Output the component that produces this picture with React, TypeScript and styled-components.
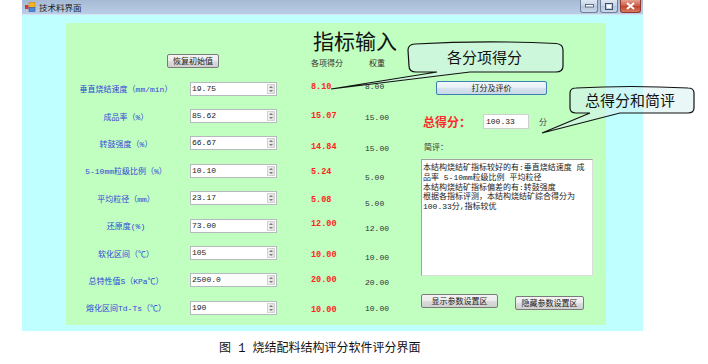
import React from 'react'
import styled, { createGlobalStyle } from 'styled-components'

const GlobalStyle = createGlobalStyle`
  html, body {
    margin: 0;
    padding: 0;
    background: #fff;
  }
  body {
    font-family: "Liberation Mono", "Noto Sans CJK SC", monospace;
  }
`

const CJK = `"Noto Sans CJK SC", sans-serif`
const MONO = `"Liberation Mono", "Noto Sans CJK SC", monospace`
const COLUMNS = '120px 91px 34px 54px 51px'

const params = [
  { label: '垂直烧结速度（mm/min）', value: '19.75', score: '8.10', weight: '8.00', sdy: -2, wdy: -2 },
  { label: '成品率（%）', value: '85.62', score: '15.07', weight: '15.00', sdy: 0, wdy: 1 },
  { label: '转鼓强度（%）', value: '66.67', score: '14.84', weight: '15.00', sdy: 4, wdy: 5 },
  { label: '5-10mm粒级比例（%）', value: '10.10', score: '5.24', weight: '5.00', sdy: 1, wdy: 7 },
  { label: '平均粒径（mm）', value: '23.17', score: '5.08', weight: '5.00', sdy: 2, wdy: 5 },
  { label: '还原度(%)', value: '73.00', score: '12.00', weight: '12.00', sdy: -2, wdy: 3 },
  { label: '软化区间（℃）', value: '105', score: '10.00', weight: '10.00', sdy: 2, wdy: 4 },
  { label: '总特性值S（KPa℃）', value: '2500.0', score: '20.00', weight: '20.00', sdy: 0, wdy: 2 },
  { label: '熔化区间Td-Ts（℃）', value: '190', score: '10.00', weight: '10.00', sdy: 2, wdy: 1 },
]

const review = [
  '本结构烧结矿指标较好的有:垂直烧结速度 成',
  '品率 5-10mm粒级比例 平均粒径',
  '本结构烧结矿指标偏差的有:转鼓强度',
  '根据各指标评测，本结构烧结矿综合得分为',
  '100.33分,指标较优',
].join('\n')

export default function App () {
  return (
    <Page>
      <GlobalStyle />
      <Window>
        <TitleBar>
          <AppIcon width="11" height="10" viewBox="0 0 11 10">
            <rect x="0" y="3" width="3.5" height="4" fill="#d23a2a" />
            <rect x="4" y="0.5" width="6" height="5" fill="#f3b422" stroke="#c98a10" strokeWidth="0.6" />
            <rect x="4" y="5.5" width="6" height="4" fill="#4f86d6" stroke="#2f5ea8" strokeWidth="0.6" />
          </AppIcon>
          <TitleText>技术料界面</TitleText>
          <Controls>
            <CtrlButton>
              <svg width="9" height="4" viewBox="0 0 9 4">
                <rect x="0.5" y="0.5" width="8" height="2.5" fill="#fff" stroke="#3d4f6b" strokeWidth="0.8" />
              </svg>
            </CtrlButton>
            <CtrlButton>
              <svg width="8" height="7" viewBox="0 0 8 7">
                <rect x="0.5" y="0.5" width="7" height="6" fill="none" stroke="#3d4f6b" strokeWidth="1" />
                <rect x="2" y="2" width="4" height="3" fill="#fff" />
              </svg>
            </CtrlButton>
            <CtrlButton $close>
              <svg width="9" height="8" viewBox="0 0 9 8">
                <path d="M1 1 L8 7 M8 1 L1 7" stroke="#fff" strokeWidth="2" />
              </svg>
            </CtrlButton>
          </Controls>
        </TitleBar>

        <Client>
          <Panel>
            <LeftPart>
              <Header>
                <RestoreButton $w={52}>恢复初始值</RestoreButton>
                <BigTitle>指标输入</BigTitle>
                <ColHead $col={4}>各项得分</ColHead>
                <ColHead $col={5} $indent={4}>权重</ColHead>
              </Header>
              <Rows>
                {params.map((p) => (
                  <React.Fragment key={p.label}>
                    <ParamLabel>{p.label}</ParamLabel>
                    <NumInput>
                      <NumText>{p.value}</NumText>
                      <Spin>
                        <SpinArrow $up />
                        <SpinArrow />
                      </Spin>
                    </NumInput>
                    <span />
                    <Score $dy={p.sdy}>{p.score}</Score>
                    <Weight $dy={p.wdy}>{p.weight}</Weight>
                  </React.Fragment>
                ))}
              </Rows>
            </LeftPart>

            <RightPart>
              <EvalButton $w={111} $focus>打分及评价</EvalButton>
              <TotalRow>
                <TotalLabel>总得分：</TotalLabel>
                <TotalBox>100.33</TotalBox>
                <Unit>分</Unit>
              </TotalRow>
              <ReviewLabel>简评：</ReviewLabel>
              <ReviewBox>{review}</ReviewBox>
              <BottomButtons>
                <Btn $w={77}>显示参数设置区</Btn>
                <Btn $w={69} $dy={2}>隐藏参数设置区</Btn>
              </BottomButtons>
            </RightPart>
          </Panel>
        </Client>
      </Window>

      <Caption>图 1 烧结配料结构评分软件评分界面</Caption>

      <Callouts width="708" height="364" viewBox="0 0 708 364">
        <path
          d="M416 72 L437 72 L331 89 L470 72 L556 72 Q563 72 563 66 L563 50 Q563 44 556 43.5 Q485 40 415 44 Q408 44.5 408 50 L409 66 Q409 72 416 72 Z"
          fill="rgba(215,240,240,0.55)"
          stroke="#111"
          strokeWidth="1.2"
        />
        <CalloutText x="447" y="63">各分项得分</CalloutText>
        <path
          d="M576 113 L590 113 L542 133 L620 113 L688 113 Q694 113 694 108 L694 93 Q694 88 688 88 Q630 85 576 88 Q570 88 570 93 L570 108 Q570 113 576 113 Z"
          fill="rgba(215,240,240,0.55)"
          stroke="#111"
          strokeWidth="1.2"
        />
        <CalloutText x="585" y="106">总得分和简评</CalloutText>
      </Callouts>
    </Page>
  )
}

const Page = styled.div`
  position: relative;
  width: 708px;
  height: 364px;
  background: #fff;
  overflow: hidden;
`

const Window = styled.div`
  margin-left: 22px;
  width: 621px;
`

const TitleBar = styled.div`
  display: flex;
  align-items: center;
  height: 15px;
  padding-left: 3px;
  box-sizing: border-box;
  background: linear-gradient(#a6bad5, #b9cde6);
  border-bottom: 1px solid #d6e4f3;
`

const AppIcon = styled.svg`
  flex: none;
`

const TitleText = styled.span`
  margin-left: 3px;
  font-family: ${CJK};
  font-size: 8.5px;
  line-height: 12px;
  color: #1b1b1b;
`

const Controls = styled.div`
  display: flex;
  gap: 2px;
  margin-left: auto;
  margin-right: 2px;
  align-self: flex-start;
`

const CtrlButton = styled.div<{ $close?: boolean }>`
  display: flex;
  align-items: center;
  justify-content: center;
  width: ${(p) => (p.$close ? 21 : 18)}px;
  height: 13px;
  box-sizing: border-box;
  border: 1px solid ${(p) => (p.$close ? '#8d3a31' : '#6f7f99')};
  border-top: none;
  border-radius: 0 0 3px 3px;
  background: ${(p) =>
    p.$close
      ? 'linear-gradient(#e6a192, #cd5a47 50%, #c0412c 51%, #d77b5f)'
      : 'linear-gradient(#dfe8f3, #c4d2e4 50%, #b4c5db 51%, #cbd9ea)'};
`

const Client = styled.div`
  height: 316px;
  box-sizing: border-box;
  padding: 8px 37px 6px 44px;
  background: #bfffff;
`

const Panel = styled.div`
  display: flex;
  width: 540px;
  height: 302px;
  background: #c0ffc0;
`

const LeftPart = styled.div`
  width: 350px;
  flex: none;
`

const Header = styled.div`
  display: grid;
  grid-template-columns: ${COLUMNS};
  grid-template-rows: 30px 22px;
`

const Btn = styled.button<{ $w: number; $focus?: boolean; $dy?: number }>`
  width: ${(p) => p.$w}px;
  height: 14px;
  padding: 0;
  margin-top: ${(p) => p.$dy ?? 0}px;
  box-sizing: border-box;
  border: 1px solid ${(p) => (p.$focus ? '#3c7fb1' : '#7a7a7a')};
  border-radius: 2px;
  background: linear-gradient(#f4f4f4 0%, #ebebeb 50%, #dddddd 51%, #cfcfcf 100%);
  font-family: ${CJK};
  font-size: 8px;
  line-height: 12px;
  color: #1a1a1a;
  cursor: default;
`

const RestoreButton = styled(Btn)`
  grid-column: 1 / 3;
  grid-row: 1 / 3;
  justify-self: start;
  align-self: end;
  margin: 0 0 7px 101px;
`

const BigTitle = styled.h1`
  grid-column: 4 / 6;
  grid-row: 1;
  margin: 0 0 0 2px;
  padding-top: 6px;
  font-family: ${CJK};
  font-weight: 400;
  font-size: 21px;
  line-height: 22px;
  color: #111;
  white-space: nowrap;
`

const ColHead = styled.span<{ $col: number; $indent?: number }>`
  grid-column: ${(p) => p.$col};
  grid-row: 2;
  align-self: center;
  margin-left: ${(p) => p.$indent ?? 0}px;
  margin-bottom: 4px;
  font-family: ${CJK};
  font-size: 8px;
  color: #333;
  white-space: nowrap;
`

const Rows = styled.div`
  display: grid;
  grid-template-columns: ${COLUMNS};
  grid-auto-rows: 27.4px;
  align-items: center;
`

const ParamLabel = styled.span`
  text-align: center;
  font-family: ${MONO};
  font-size: 8px;
  color: #3346d8;
  white-space: nowrap;
`

const NumInput = styled.div`
  justify-self: end;
  display: flex;
  align-items: stretch;
  width: 87px;
  height: 14px;
  box-sizing: border-box;
  border: 1px solid #b5b9c0;
  background: #fff;
`

const NumText = styled.span`
  flex: 1;
  padding-left: 1px;
  font-family: ${MONO};
  font-size: 8px;
  line-height: 11px;
  color: #222;
`

const Spin = styled.div`
  display: flex;
  flex-direction: column;
  width: 8px;
  margin: 1px 1px 1px 0;
  background: linear-gradient(90deg, #f2f2f2, #dedede);
  border: 1px solid #d2d2d2;
  box-sizing: border-box;
`

const SpinArrow = styled.div<{ $up?: boolean }>`
  flex: 1;
  display: flex;
  align-items: center;
  justify-content: center;
  &::after {
    content: '';
    border-left: 2px solid transparent;
    border-right: 2px solid transparent;
    ${(p) => (p.$up ? 'border-bottom: 2px solid #7a7a7a;' : 'border-top: 2px solid #7a7a7a;')}
  }
`

const Score = styled.span<{ $dy: number }>`
  margin-top: ${(p) => p.$dy * 2}px;
  font-family: ${MONO};
  font-weight: 700;
  font-size: 8.5px;
  color: #ff2424;
`

const Weight = styled.span<{ $dy: number }>`
  margin-top: ${(p) => p.$dy * 2}px;
  font-family: ${MONO};
  font-size: 8px;
  color: #333;
`

const RightPart = styled.div`
  display: flex;
  flex-direction: column;
  align-items: flex-start;
  padding: 58px 0 0 5px;
`

const EvalButton = styled(Btn)`
  margin-left: 15px;
  background: linear-gradient(#f2f8fc 0%, #e6eef5 50%, #d7e3ee 51%, #cad9e8 100%);
`

const TotalRow = styled.div`
  display: flex;
  align-items: center;
  margin-top: 19px;
  margin-left: 2px;
`

const TotalLabel = styled.span`
  font-family: ${CJK};
  font-weight: 700;
  font-size: 12px;
  line-height: 15px;
  color: #ff2a2a;
  width: 60px;
`

const TotalBox = styled.div`
  width: 46px;
  height: 15px;
  box-sizing: border-box;
  padding-left: 2px;
  border: 1px solid #d0d0d0;
  background: #fff;
  font-family: ${MONO};
  font-size: 8px;
  line-height: 13px;
  color: #222;
`

const Unit = styled.span`
  margin-left: 10px;
  font-family: ${CJK};
  font-size: 8px;
  color: #444;
`

const ReviewLabel = styled.span`
  margin: 13px 0 0 3px;
  font-family: ${CJK};
  font-size: 8px;
  line-height: 10px;
  color: #333;
`

const ReviewBox = styled.div`
  width: 172px;
  height: 117px;
  margin-top: 7px;
  box-sizing: border-box;
  padding: 3px 0 0 1px;
  border: 1px solid #a3a3a3;
  border-right-color: #dcdcdc;
  border-bottom-color: #dcdcdc;
  background: #fff;
  white-space: pre;
  font-family: ${MONO};
  font-size: 8px;
  line-height: 9.8px;
  color: #1a1a1a;
`

const BottomButtons = styled.div`
  display: flex;
  align-items: flex-start;
  gap: 17px;
  margin-top: 18px;
`

const Caption = styled.div`
  margin-top: 11px;
  padding-left: 219px;
  font-family: ${MONO};
  font-size: 12px;
  line-height: 14px;
  color: #111;
`

const Callouts = styled.svg`
  position: absolute;
  top: 0;
  left: 0;
  pointer-events: none;
`

const CalloutText = styled.text`
  font-family: ${CJK};
  font-size: 15px;
  fill: #111;
`
